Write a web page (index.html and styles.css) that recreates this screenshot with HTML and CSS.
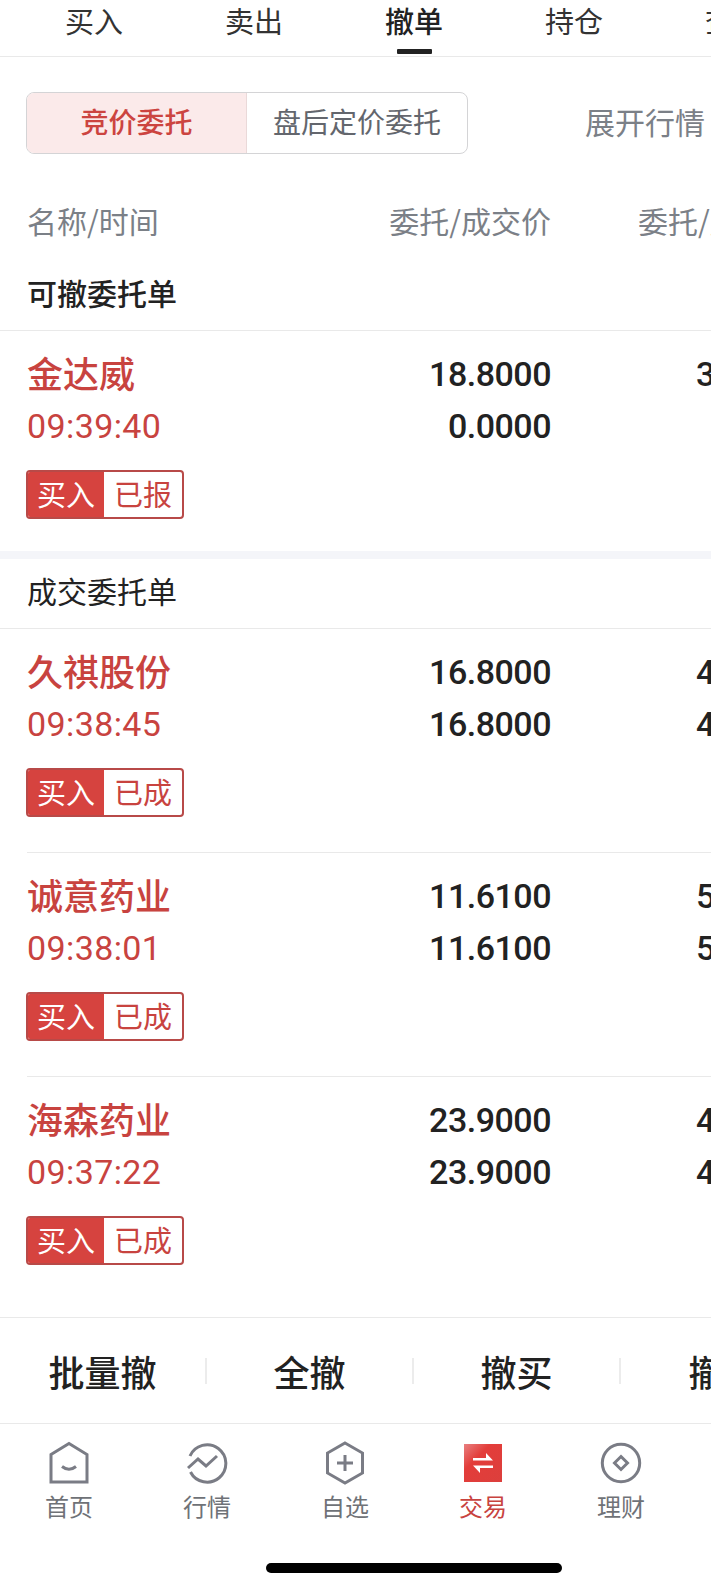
FILE: index.html
```html
<!DOCTYPE html>
<html lang="zh-CN">
<head>
  <meta charset="UTF-8" />
  <meta name="viewport" content="width=device-width, initial-scale=1.0"/>
  <title>撤单</title>
  <link rel="stylesheet" href="styles.css">
</head>
<body>
  <div class="page">
    <!-- Top tabs -->
    <div class="tabs">
      <div class="tab">买入</div>
      <div class="tab">卖出</div>
      <div class="tab active">撤单</div>
      <div class="tab">持仓</div>
      <div class="tab">查询</div>
    </div>

    <!-- Segment switch -->
    <div class="filter">
      <div class="segment">
        <div class="seg-item on">竞价委托</div>
        <div class="seg-item">盘后定价委托</div>
      </div>
      <div class="expand">展开行情</div>
    </div>

    <div class="table-head">
      <span>名称/时间</span>
      <span class="head-price">委托/成交价</span>
      <span class="head-amount">委托/成交量</span>
    </div>

    <div class="section-title first">可撤委托单</div>
    <div class="order order-first">
      <div class="left">
        <div class="name">金达威</div>
        <div class="time">09:39:40</div>
        <div class="tag"><span class="side">买入</span><span class="state">已报</span></div>
      </div>
      <div class="price"><div>18.8000</div><div>0.0000</div></div>
      <div class="amount"><div>300</div><div></div></div>
    </div>

    <div class="gap"></div>

    <div class="section-title">成交委托单</div>
    <div class="order">
      <div class="left">
        <div class="name">久祺股份</div>
        <div class="time">09:38:45</div>
        <div class="tag"><span class="side">买入</span><span class="state">已成</span></div>
      </div>
      <div class="price"><div>16.8000</div><div>16.8000</div></div>
      <div class="amount"><div>400</div><div>400</div></div>
    </div>
    <div class="order">
      <div class="left">
        <div class="name">诚意药业</div>
        <div class="time">09:38:01</div>
        <div class="tag"><span class="side">买入</span><span class="state">已成</span></div>
      </div>
      <div class="price"><div>11.6100</div><div>11.6100</div></div>
      <div class="amount"><div>500</div><div>500</div></div>
    </div>
    <div class="order last">
      <div class="left">
        <div class="name">海森药业</div>
        <div class="time">09:37:22</div>
        <div class="tag"><span class="side">买入</span><span class="state">已成</span></div>
      </div>
      <div class="price"><div>23.9000</div><div>23.9000</div></div>
      <div class="amount"><div>400</div><div>400</div></div>
    </div>

    <!-- Bulk actions -->
    <div class="actions">
      <div class="action">批量撤</div>
      <div class="action">全撤</div>
      <div class="action">撤买</div>
      <div class="action">撤卖</div>
    </div>

    <!-- Bottom nav -->
    <div class="nav">
      <div class="nav-item">
        <svg class="icon" viewBox="0 0 44 44">
          <path d="M4 13.5 22 2.5 40 13.5 V41 H4 Z" fill="none" stroke="#7a7c85" stroke-width="3"/>
          <path d="M15 25.5 Q22 31 29 25.5" fill="none" stroke="#7a7c85" stroke-width="3"/>
        </svg>
        <span>首页</span>
      </div>
      <div class="nav-item">
        <svg class="icon" viewBox="0 0 44 44">
          <path d="M5 15 A18.7 18.7 0 1 1 5.5 31" fill="none" stroke="#7a7c85" stroke-width="3"/>
          <path d="M3 27 13 18 21 25 32 15" fill="none" stroke="#7a7c85" stroke-width="3"/>
        </svg>
        <span>行情</span>
      </div>
      <div class="nav-item">
        <svg class="icon" viewBox="0 0 44 44">
          <path d="M22 2 39.5 12 V32 L22 42 4.5 32 V12 Z" fill="none" stroke="#7a7c85" stroke-width="3"/>
          <path d="M22 14 V30 M14 22 H30" fill="none" stroke="#7a7c85" stroke-width="3"/>
        </svg>
        <span>自选</span>
      </div>
      <div class="nav-item current">
        <svg class="icon" viewBox="0 0 44 44">
          <defs>
            <linearGradient id="tradeFill" x1="0" y1="0" x2="1" y2="1">
              <stop offset="0" stop-color="#e88080"/>
              <stop offset="0.35" stop-color="#e33d3a"/>
              <stop offset="1" stop-color="#dc3f3c"/>
            </linearGradient>
          </defs>
          <rect x="3" y="3" width="38" height="38" fill="url(#tradeFill)"/>
          <path d="M12 17 H25 V12 L32 19.5 H12 Z M32 24.5 H12 L19 32 V27 H32 Z" fill="#fff"/>
        </svg>
        <span>交易</span>
      </div>
      <div class="nav-item">
        <svg class="icon" viewBox="0 0 44 44">
          <circle cx="22" cy="22" r="18.7" fill="none" stroke="#7a7c85" stroke-width="3"/>
          <path d="M22 15.5 28.5 22 22 28.5 15.5 22 Z" fill="none" stroke="#7a7c85" stroke-width="3"/>
        </svg>
        <span>理财</span>
      </div>
    </div>

    <div class="home-bar"></div>
  </div>
</body>
</html>
```
FILE: styles.css
```css
html, body {
  margin: 0;
  padding: 0;
  background: #fff;
}
body {
  width: 711px;
  height: 1589px;
  overflow: hidden;
  font-family: "Noto Sans CJK SC", "Noto Sans", sans-serif;
  color: #222;
}
.page {
  width: 711px;
  height: 1589px;
  overflow: hidden;
}

/* tabs */
.tabs {
  display: flex;
  height: 56px;
  padding-left: 14px;
  border-bottom: 1px solid #e9e9e9;
}
.tab {
  flex: 0 0 160px;
  position: relative;
  text-align: center;
  font-size: 29px;
  line-height: 40px;
  color: #333;
}
.tab.active {
  font-weight: 500;
  color: #222;
}
.tab.active::after {
  content: "";
  position: absolute;
  left: 63px;
  top: 49px;
  width: 35px;
  height: 5px;
  background: #222;
  border-radius: 1px;
}

/* segment */
.filter {
  display: flex;
  align-items: center;
  margin-top: 35px;
  padding-left: 26px;
  height: 62px;
}
.segment {
  display: flex;
  width: 442px;
  height: 62px;
  box-sizing: border-box;
  border: 1px solid #d4d4d6;
  border-radius: 8px;
  overflow: hidden;
}
.seg-item {
  flex: 1;
  display: flex;
  justify-content: center;
  align-items: center;
  padding-bottom: 4px;
  font-size: 28px;
  color: #63666d;
}
.seg-item.on {
  flex: 0 0 220px;
  box-sizing: border-box;
  background: #fbeaea;
  color: #cc4440;
  font-weight: 500;
  border-right: 1px solid #ead9d9;
}
.expand {
  margin-left: auto;
  margin-right: 6px;
  margin-bottom: 5px;
  width: 120px;
  font-size: 30px;
  line-height: 52px;
  color: #7b8087;
  white-space: nowrap;
}

/* table head */
.table-head {
  display: grid;
  grid-template-columns: 300px 224px 300px;
  width: 1000px;
  padding-left: 27px;
  margin-top: 44px;
  font-size: 30px;
  line-height: 44px;
  color: #7b8087;
  white-space: nowrap;
}
.head-price {
  text-align: right;
}
.head-amount {
  margin-left: 87px;
}

.section-title {
  height: 70px;
  box-sizing: border-box;
  padding-left: 27px;
  font-size: 30px;
  line-height: 62px;
  color: #222;
  border-bottom: 1px solid #e9e9e9;
}
.section-title.first {
  font-weight: 500;
  height: 74px;
  line-height: 70px;
  margin-top: 15px;
}

/* order rows */
.order {
  display: grid;
  grid-template-columns: 300px 224px 300px;
  width: 1000px;
  box-sizing: border-box;
  height: 224px;
  margin-left: 27px;
  padding-top: 18px;
  border-bottom: 1px solid #e9e9e9;
}
.order-first {
  height: 220px;
  border-bottom: none;
}
.order.last {
  height: 240px;
  border-bottom: none;
}
.name {
  margin: -3px 0 3px;
  font-size: 36px;
  line-height: 52px;
  font-weight: 500;
  color: #c8433f;
  white-space: nowrap;
}
.time {
  font-family: Roboto, sans-serif;
  font-size: 34px;
  line-height: 50px;
  margin-bottom: 2px;
  letter-spacing: 0.4px;
  color: #c8433f;
}
.tag {
  display: inline-flex;
  margin-top: 17px;
  margin-left: -1px;
  width: 158px;
  height: 49px;
  box-sizing: border-box;
  border: 2px solid #b84a48;
  border-radius: 4px;
  overflow: hidden;
  font-size: 29px;
  line-height: 42px;
}
.side {
  flex: 0 0 76px;
  text-align: center;
  color: #fff;
  background: #d6433f;
}
.state {
  flex: 1;
  text-align: center;
  color: #c8433f;
}
.price, .amount {
  margin-top: -1px;
  font-family: Roboto, sans-serif;
  font-size: 34px;
  letter-spacing: -0.5px;
  line-height: 52px;
  font-weight: 500;
  color: #222;
}
.price {
  text-align: right;
}
.amount {
  margin-left: 145px;
}

.gap {
  height: 8px;
  background: #f4f5f9;
}

/* bulk actions */
.actions {
  display: flex;
  width: 900px;
  height: 106px;
  box-sizing: border-box;
  border-top: 1px solid #e9e9e9;
  align-items: center;
}
.action {
  flex: 0 0 207px;
  text-align: center;
  font-size: 36px;
  font-weight: 500;
  line-height: 26px;
  color: #222;
  border-right: 2px solid #ececec;
  box-sizing: border-box;
}
.action:last-child {
  border-right: none;
}

/* bottom nav */
.nav {
  display: flex;
  border-top: 1px solid #e9e9e9;
  padding-top: 17px;
}
.nav-item {
  flex: 0 0 138px;
  display: flex;
  flex-direction: column;
  align-items: center;
  font-size: 24px;
  line-height: 32px;
  color: #6f7277;
}
.nav-item.current {
  color: #c8433f;
}
.icon {
  display: block;
  width: 44px;
  height: 44px;
  margin-bottom: 5px;
}
.home-bar {
  width: 296px;
  height: 10px;
  margin: 41px 0 0 266px;
  border-radius: 5px;
  background: #000;
}
```
